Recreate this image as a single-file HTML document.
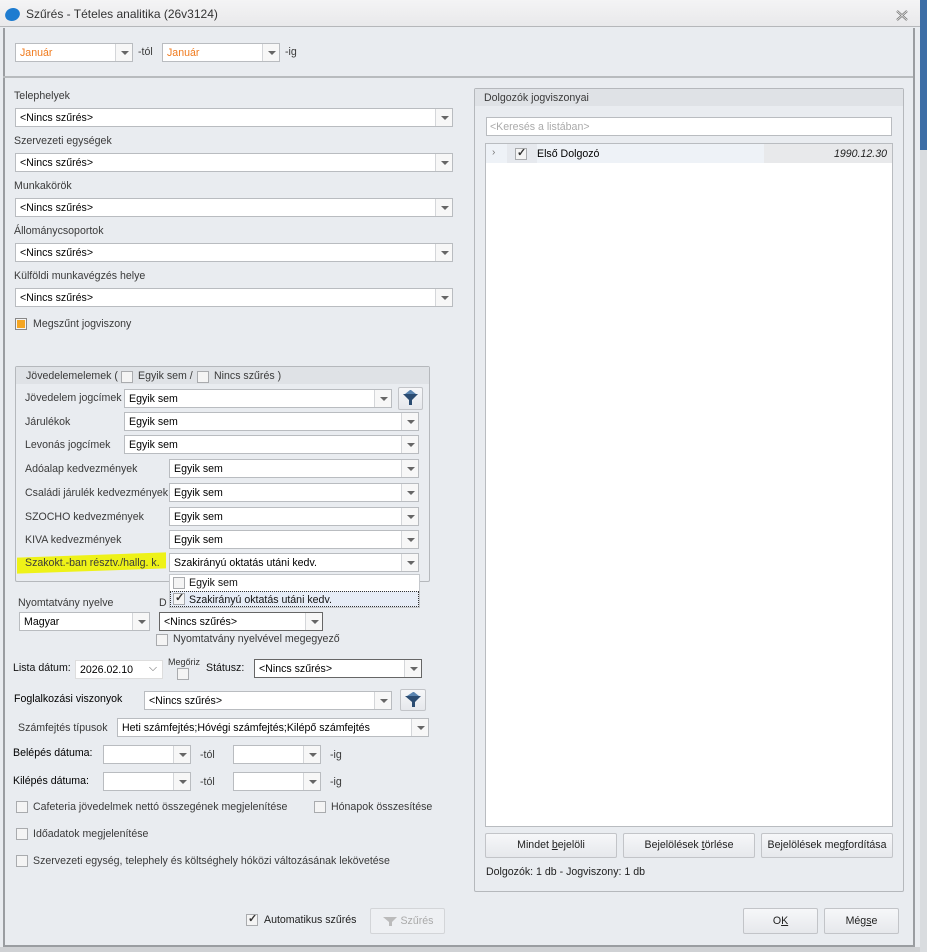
<!DOCTYPE html>
<html><head><meta charset="utf-8">
<style>
*{box-sizing:border-box;margin:0;padding:0}
body{width:927px;height:952px;position:relative;overflow:hidden;background:#e9ecf0;font-family:"Liberation Sans",sans-serif;font-size:10.6px;color:#333}
.a{position:absolute;white-space:nowrap}
.cb{position:absolute;background:#fff;border:1px solid #b9bcc0;height:19px;font-size:10.6px;color:#000;padding:3px 0 0 4px;white-space:nowrap;overflow:hidden}
.cb .dd{position:absolute;right:0;top:0;bottom:0;width:17px;border-left:1px solid #d4d6d9;background:#f7f7f7}
.cb .dd:after{content:"";position:absolute;left:5px;top:7px;border-left:4px solid transparent;border-right:4px solid transparent;border-top:4px solid #666}
.chk{position:absolute;width:12px;height:12px;border:1px solid #a9abae;background:#f4f4f4}
.chk.on:after{content:"✓";position:absolute;left:1px;top:-3px;font-size:11px;color:#333;font-weight:bold}
.btn{position:absolute;border:1px solid #c2c4c8;border-radius:2px;background:linear-gradient(#f6f7f9,#e6e8ec);text-align:center;color:#222;font-size:10.6px}
.lbl{position:absolute;white-space:nowrap;color:#3a3a3a}
</style></head><body>
<div class="a" style="left:0;top:0;width:920px;height:27px;background:linear-gradient(#f4f4f5,#e9e9eb);border-bottom:1px solid #b5b7ba"></div>
<div class="a" style="left:5px;top:7px;width:15px;height:15px;border-radius:50%;background:#1e7cd0;transform:rotate(-20deg) scaleY(.85)"></div>
<div class="a" style="left:26px;top:7px;font-size:12px;color:#333">Szűrés - Tételes analitika (26v3124)</div>
<svg class="a" style="left:896px;top:10px" width="12" height="11"><path d="M1 1L11 10M11 1L1 10" stroke="#777" stroke-width="2.2"/><path d="M1 1L11 10M11 1L1 10" stroke="#eee" stroke-width=".8"/></svg>
<div class="a" style="left:920px;top:0;width:7px;height:150px;background:#3c6ea6"></div>
<div class="a" style="left:920px;top:150px;width:7px;height:802px;background:#d9dcdf"></div>
<div class="a" style="left:3px;top:28px;width:2px;height:918px;background:#9a9da1"></div>
<div class="a" style="left:913px;top:28px;width:2px;height:918px;background:#9a9da1"></div>
<div class="a" style="left:3px;top:945px;width:912px;height:2px;background:#9a9da1"></div>
<div class="a" style="left:0;top:947px;width:920px;height:5px;background:#cfd1d4"></div>
<div class="a" style="left:3px;top:76px;width:910px;height:2px;background:#b8bbbe"></div>
<div class="cb" style="left:15px;top:43px;width:118px;color:#f07a1c">Január<div class="dd"></div></div>
<div class="lbl" style="left:138px;top:46px">-tól</div>
<div class="cb" style="left:162px;top:43px;width:118px;color:#f07a1c">Január<div class="dd"></div></div>
<div class="lbl" style="left:285px;top:46px">-ig</div>
<div class="lbl" style="left:14px;top:90px">Telephelyek</div>
<div class="cb" style="left:15px;top:108px;width:438px">&lt;Nincs szűrés&gt;<div class="dd"></div></div>
<div class="lbl" style="left:14px;top:135px">Szervezeti egységek</div>
<div class="cb" style="left:15px;top:153px;width:438px">&lt;Nincs szűrés&gt;<div class="dd"></div></div>
<div class="lbl" style="left:14px;top:180px">Munkakörök</div>
<div class="cb" style="left:15px;top:198px;width:438px">&lt;Nincs szűrés&gt;<div class="dd"></div></div>
<div class="lbl" style="left:14px;top:225px">Állománycsoportok</div>
<div class="cb" style="left:15px;top:243px;width:438px">&lt;Nincs szűrés&gt;<div class="dd"></div></div>
<div class="lbl" style="left:14px;top:270px">Külföldi munkavégzés helye</div>
<div class="cb" style="left:15px;top:288px;width:438px">&lt;Nincs szűrés&gt;<div class="dd"></div></div>
<div class="chk" style="left:15px;top:318px;border-color:#888"><div style="position:absolute;left:1px;top:1px;width:8px;height:8px;background:#f5a623"></div></div>
<div class="lbl" style="left:33px;top:318px">Megszűnt jogviszony</div>
<div class="a" style="left:15px;top:366px;width:415px;height:216px;border:1px solid #b5b8bc;border-radius:2px"></div>
<div class="a" style="left:16px;top:367px;width:413px;height:17px;background:#dfe2e6"></div>
<div class="lbl" style="left:26px;top:370px">Jövedelemelemek (</div>
<div class="chk" style="left:121px;top:371px"></div>
<div class="lbl" style="left:138px;top:370px">Egyik sem /</div>
<div class="chk" style="left:197px;top:371px"></div>
<div class="lbl" style="left:214px;top:370px">Nincs szűrés )</div>
<div class="lbl" style="left:25px;top:392px">Jövedelem jogcímek</div>
<div class="cb" style="left:124px;top:389px;width:268px">Egyik sem<div class="dd"></div></div>
<div class="btn" style="left:398px;top:387px;width:25px;height:23px"><svg width="23" height="21"><path d="M4 6L19 6L13 12L13 17L10 17L10 12Z" fill="#2b4c72"/><path d="M6 6L11 2L12 2L17 6" fill="#5a84b0"/></svg></div>
<div class="lbl" style="left:25px;top:416px">Járulékok</div>
<div class="cb" style="left:124px;top:412px;width:295px">Egyik sem<div class="dd"></div></div>
<div class="lbl" style="left:25px;top:439px">Levonás jogcímek</div>
<div class="cb" style="left:124px;top:435px;width:295px">Egyik sem<div class="dd"></div></div>
<div class="lbl" style="left:25px;top:463px">Adóalap kedvezmények</div>
<div class="cb" style="left:169px;top:459px;width:250px">Egyik sem<div class="dd"></div></div>
<div class="lbl" style="left:25px;top:487px">Családi járulék kedvezmények</div>
<div class="cb" style="left:169px;top:483px;width:250px">Egyik sem<div class="dd"></div></div>
<div class="lbl" style="left:25px;top:511px">SZOCHO kedvezmények</div>
<div class="cb" style="left:169px;top:507px;width:250px">Egyik sem<div class="dd"></div></div>
<div class="lbl" style="left:25px;top:534px">KIVA kedvezmények</div>
<div class="cb" style="left:169px;top:530px;width:250px">Egyik sem<div class="dd"></div></div>
<div class="a" style="left:17px;top:555px;width:149px;height:16px;background:#eef218;transform:skewY(-2deg)"></div>
<div class="lbl" style="left:25px;top:557px">Szakokt.-ban résztv./hallg. k.</div>
<div class="cb" style="left:169px;top:553px;width:250px">Szakirányú oktatás utáni kedv.<div class="dd"></div></div>
<div class="a" style="left:169px;top:574px;width:251px;height:34px;background:#fff;border:1px solid #c5c8cc"></div>
<div class="chk" style="left:173px;top:577px"></div>
<div class="a" style="left:189px;top:577px;color:#111">Egyik sem</div>
<div class="a" style="left:170px;top:591px;width:249px;height:16px;background:#e6ecf6;border:1px dotted #333"></div>
<div class="chk on" style="left:173px;top:593px"></div>
<div class="a" style="left:189px;top:594px;color:#111">Szakirányú oktatás utáni kedv.</div>
<div class="lbl" style="left:18px;top:597px">Nyomtatvány nyelve</div>
<div class="lbl" style="left:159px;top:597px">D</div>
<div class="cb" style="left:19px;top:612px;width:131px">Magyar<div class="dd"></div></div>
<div class="cb" style="left:159px;top:612px;width:164px;border-color:#666">&lt;Nincs szűrés&gt;<div class="dd"></div></div>
<div class="chk" style="left:156px;top:634px"></div>
<div class="lbl" style="left:173px;top:633px">Nyomtatvány nyelvével megegyező</div>
<div class="lbl" style="left:13px;top:662px;color:#111">Lista dátum:</div>
<div class="cb" style="left:75px;top:660px;width:88px;border-color:#ddd">2026.02.10<span style="position:absolute;right:5px;top:1px;color:#666">⌵</span></div>
<div class="a" style="left:168px;top:657px;font-size:9px">Megőriz</div>
<div class="chk" style="left:177px;top:668px"></div>
<div class="lbl" style="left:206px;top:662px;color:#111">Státusz:</div>
<div class="cb" style="left:254px;top:659px;width:168px;border-color:#666">&lt;Nincs szűrés&gt;<div class="dd"></div></div>
<div class="lbl" style="left:14px;top:693px;color:#000">Foglalkozási viszonyok</div>
<div class="cb" style="left:144px;top:691px;width:248px">&lt;Nincs szűrés&gt;<div class="dd"></div></div>
<div class="btn" style="left:400px;top:689px;width:26px;height:22px"><svg width="24" height="20"><path d="M4 6L20 6L14 12L14 17L11 17L11 12Z" fill="#2b4c72"/><path d="M6 6L12 2L13 2L18 6" fill="#5a84b0"/></svg></div>
<div class="lbl" style="left:18px;top:722px">Számfejtés típusok</div>
<div class="cb" style="left:117px;top:718px;width:312px">Heti számfejtés;Hóvégi számfejtés;Kilépő számfejtés<div class="dd"></div></div>
<div class="lbl" style="left:13px;top:747px;color:#000">Belépés dátuma:</div>
<div class="cb" style="left:103px;top:745px;width:88px"><div class="dd"></div></div>
<div class="lbl" style="left:200px;top:749px">-tól</div>
<div class="cb" style="left:233px;top:745px;width:88px"><div class="dd"></div></div>
<div class="lbl" style="left:330px;top:749px">-ig</div>
<div class="lbl" style="left:13px;top:775px;color:#000">Kilépés dátuma:</div>
<div class="cb" style="left:103px;top:772px;width:88px"><div class="dd"></div></div>
<div class="lbl" style="left:200px;top:776px">-tól</div>
<div class="cb" style="left:233px;top:772px;width:88px"><div class="dd"></div></div>
<div class="lbl" style="left:330px;top:776px">-ig</div>
<div class="chk" style="left:16px;top:801px"></div>
<div class="lbl" style="left:33px;top:801px">Cafeteria jövedelmek nettó összegének megjelenítése</div>
<div class="chk" style="left:314px;top:801px"></div>
<div class="lbl" style="left:331px;top:801px">Hónapok összesítése</div>
<div class="chk" style="left:16px;top:828px"></div>
<div class="lbl" style="left:33px;top:828px">Időadatok megjelenítése</div>
<div class="chk" style="left:16px;top:855px"></div>
<div class="lbl" style="left:33px;top:855px">Szervezeti egység, telephely és költséghely hóközi változásának lekövetése</div>
<div class="chk on" style="left:246px;top:914px"></div>
<div class="lbl" style="left:264px;top:914px;color:#222">Automatikus szűrés</div>
<div class="btn" style="left:370px;top:908px;width:75px;height:26px;line-height:24px;color:#aaa;background:#eef0f3;border-color:#d3d5d8"><svg width="16" height="14" style="vertical-align:-3px"><path d="M1 4L15 4L10 9L10 13L7 13L7 9Z" fill="#bbb"/></svg> Szűrés</div>
<div class="a" style="left:474px;top:88px;width:430px;height:804px;border:1px solid #b5b8bc;border-radius:2px"></div>
<div class="a" style="left:475px;top:89px;width:428px;height:17px;background:#dfe2e6"></div>
<div class="lbl" style="left:484px;top:92px">Dolgozók jogviszonyai</div>
<div class="a" style="left:486px;top:117px;width:406px;height:19px;background:#fff;border:1px solid #b9bcc0;color:#aaa;padding:3px 3px">&lt;Keresés a listában&gt;</div>
<div class="a" style="left:485px;top:143px;width:408px;height:684px;background:#fff;border:1px solid #b9bcc0"></div>
<div class="a" style="left:486px;top:144px;width:406px;height:19px;background:#eef2f7"></div>
<div class="a" style="left:507px;top:144px;width:30px;height:19px;background:#e6e9ee"></div>
<div class="a" style="left:764px;top:144px;width:128px;height:19px;background:#e8e9eb"></div>
<div class="a" style="left:492px;top:147px;color:#777;font-size:10px">›</div>
<div class="chk on" style="left:515px;top:148px"></div>
<div class="a" style="left:537px;top:148px;color:#000">Első Dolgozó</div>
<div class="a" style="left:834px;top:148px;color:#222;font-style:italic">1990.12.30</div>
<div class="btn" style="left:485px;top:833px;width:132px;height:25px;line-height:23px">Mindet <u>b</u>ejelöli</div>
<div class="btn" style="left:623px;top:833px;width:132px;height:25px;line-height:23px">Bejelölések <u>t</u>örlése</div>
<div class="btn" style="left:761px;top:833px;width:132px;height:25px;line-height:23px">Bejelölések meg<u>f</u>ordítása</div>
<div class="lbl" style="left:486px;top:866px;color:#222">Dolgozók: 1 db - Jogviszony: 1 db</div>
<div class="btn" style="left:743px;top:908px;width:75px;height:26px;line-height:24px">O<u>K</u></div>
<div class="btn" style="left:824px;top:908px;width:75px;height:26px;line-height:24px">Még<u>s</u>e</div>
</body></html>
